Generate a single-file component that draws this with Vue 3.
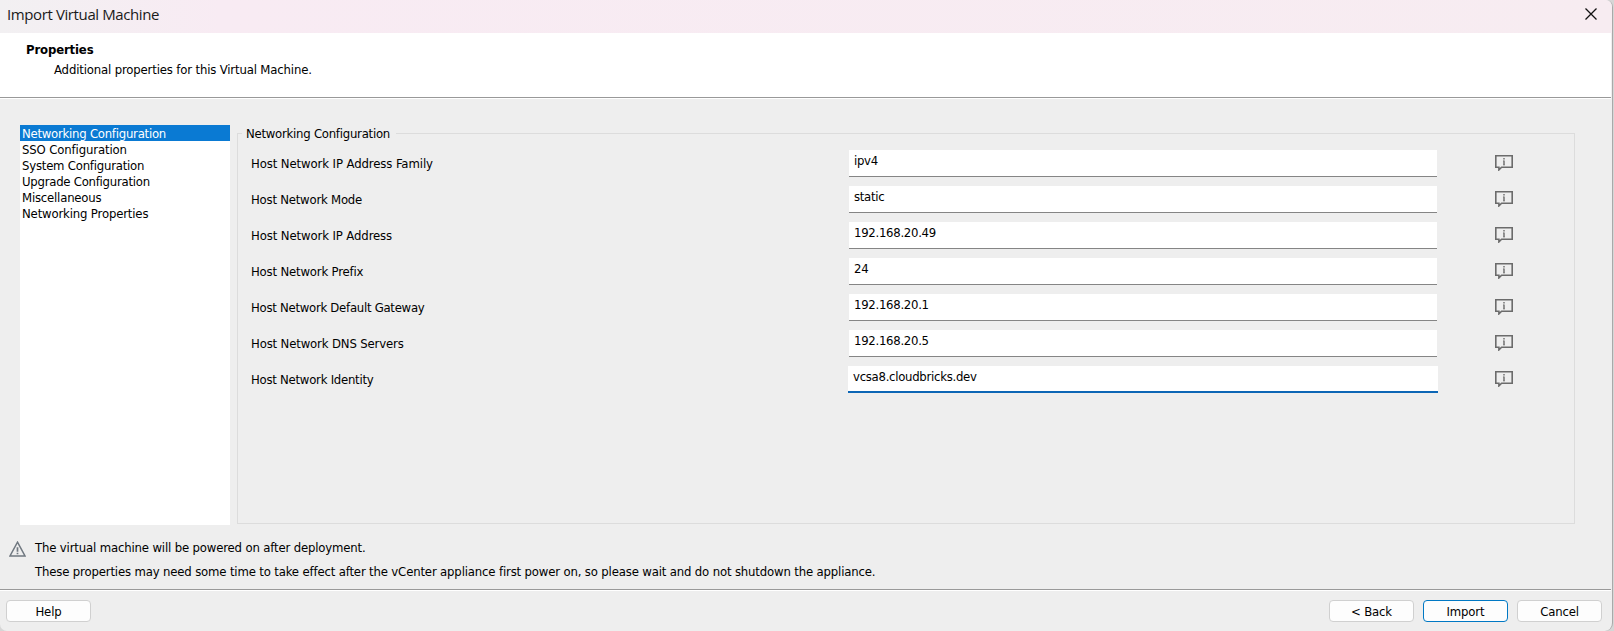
<script setup>
// Tracking is the letter spacing of each caption, in pixels.
const categories = [
  { name: 'Networking Configuration', tracking: -0.25 },
  { name: 'SSO Configuration', tracking: -0.13 },
  { name: 'System Configuration', tracking: -0.22 },
  { name: 'Upgrade Configuration', tracking: -0.25 },
  { name: 'Miscellaneous', tracking: -0.2 },
  { name: 'Networking Properties', tracking: -0.16 },
]
const fields = [
  { label: 'Host Network IP Address Family', tracking: -0.1, value: 'ipv4' },
  { label: 'Host Network Mode', tracking: -0.22, value: 'static' },
  { label: 'Host Network IP Address', tracking: -0.11, value: '192.168.20.49' },
  { label: 'Host Network Prefix', tracking: -0.18, value: '24' },
  { label: 'Host Network Default Gateway', tracking: -0.27, value: '192.168.20.1' },
  { label: 'Host Network DNS Servers', tracking: -0.15, value: '192.168.20.5' },
  { label: 'Host Network Identity', tracking: -0.25, value: 'vcsa8.cloudbricks.dev', focused: true },
]
const tracked = (item) => ({ letterSpacing: `${item.tracking}px` })
</script>

<template>
  <div class="desktop">
    <div class="window">
      <header class="titlebar">
        <span class="title">Import Virtual Machine</span>
        <svg class="close" width="12" height="12" viewBox="0 0 12 12">
          <path d="M0.5 0.5 L11.5 11.5 M11.5 0.5 L0.5 11.5" />
        </svg>
      </header>

      <section class="banner">
        <h1>Properties</h1>
        <p>Additional properties for this Virtual Machine.</p>
      </section>

      <main class="content">
        <ul class="categories">
          <li v-for="(c, i) in categories" :key="c.name" :class="{ selected: i === 0 }" :style="tracked(c)">{{ c.name }}</li>
        </ul>

        <section class="group">
          <h2>Networking Configuration</h2>
          <div v-for="f in fields" :key="f.label" class="row">
            <label :style="tracked(f)">{{ f.label }}</label>
            <div class="field" :class="{ focused: f.focused }">{{ f.value }}</div>
            <svg class="info" width="18" height="16" viewBox="0 0 18 16">
              <path d="M0.8 0.8 H17.2 V12.2 H6.6 L3.9 14.9 V12.2 H0.8 Z" />
              <path class="i" d="M9 3 V4.6 M9 5.6 V10" />
              <path class="serif" d="M8 6 H9 M8 10 H10" />
            </svg>
          </div>
        </section>
      </main>

      <section class="notice">
        <svg class="warn" width="17" height="16" viewBox="0 0 17 16">
          <path d="M8.5 1.2 L16 15 H1 Z" />
          <path class="mark" d="M8.5 6.2 V10.8 M8.5 11.8 V13.2" />
        </svg>
        <div>
          <p>The virtual machine will be powered on after deployment.</p>
          <p>These properties may need some time to take effect after the vCenter appliance first power on, so please wait and do not shutdown the appliance.</p>
        </div>
      </section>

      <footer class="footer">
        <button class="help">Help</button>
        <button>&lt; Back</button>
        <button class="primary">Import</button>
        <button>Cancel</button>
      </footer>
    </div>
  </div>
</template>

<style>
body { margin: 0; overflow: hidden; }
</style>

<style scoped>
* { box-sizing: border-box; }
h1, h2, p, ul { margin: 0; padding: 0; font-weight: normal; }
.desktop { width: 1614px; height: 631px; background: #d6d6d6; overflow: hidden; }
.window {
  width: 1613px;
  height: 631px;
  display: flex;
  flex-direction: column;
  background: #eeeeee;
  border-right: 1px solid #a9a9a9;
  border-radius: 0 7px 8px 7px;
  overflow: hidden;
  color: #000;
  font: 13px/16px Tahoma, "DejaVu Sans Condensed", "DejaVu Sans", sans-serif;
  font-stretch: condensed;
  letter-spacing: -0.158px;
  white-space: nowrap;
}
.titlebar {
  height: 33px;
  flex: none;
  display: flex;
  align-items: center;
  justify-content: space-between;
  padding: 0 15px 5px 7px;
  background: linear-gradient(90deg, #f2f0f2 0, #f8ebf3 220px, #f7ecf1 100%);
}
.title { font: 15px/20px "Segoe UI", "Open Sans", sans-serif; letter-spacing: -0.39px; color: #1a1a1a; }
.close path { stroke: #111; stroke-width: 1.3; fill: none; }
.banner {
  height: 66px;
  flex: none;
  margin-right: 1px;
  padding: 9px 0 0 26px;
  background: #fff;
  box-shadow: inset 0 -1px #fff, inset 0 -2px #999;
}
.banner h1 { font-size: 13px; font-weight: bold; line-height: 16px; letter-spacing: -0.15px; }
.banner p { padding: 4px 0 0 28px; }
.content { height: 427px; flex: none; display: flex; padding: 26px 37px 0 20px; gap: 7px; }
.categories { width: 210px; height: 400px; background: #fff; list-style: none; }
.categories li { height: 16px; padding-left: 2px; line-height: 18px; }
.categories .selected { background: #0a7ad3; color: #fff; }
.group { flex: 1; height: 391px; margin-top: 8px; border: 1px solid #dcdcdc; padding-left: 13px; }
.group h2 {
  width: 154px;
  height: 16px;
  margin: -9px 0 0 -9px;
  padding-left: 4px;
  font-size: 13px;
  line-height: 18px;
  letter-spacing: -0.25px;
  background: #eee;
}
.row { height: 36px; display: flex; align-items: flex-start; }
.group h2 + .row { margin-top: 9px; }
.row label { width: 598px; padding-top: 6px; }
.field {
  width: 588px;
  height: 27px;
  padding: 3px 0 0 5px;
  background: #fff;
  border-bottom: 1px solid #858585;
  letter-spacing: -0.28px;
}
.field.focused { width: 590px; margin: 0 -1px; border-bottom: 2px solid #0c66b5; }
.info { margin: 5px 0 0 58px; fill: none; stroke: #6b6b6b; stroke-width: 1.6; }
.info .i { stroke-width: 1.4; }
.info .serif { stroke-width: 0.6; }
.notice { height: 63px; flex: none; display: flex; padding: 14px 0 0 9px; gap: 9px; }
.notice p { height: 24px; }
.warn { margin-top: 1px; fill: none; stroke: #707880; stroke-width: 1.5; }
.warn .mark { stroke-width: 1.7; }
.footer {
  flex: 1;
  display: flex;
  gap: 9px;
  margin-right: 1px;
  padding: 11px 9px 0 6px;
  box-shadow: inset 0 1px #999, inset 0 2px #fff;
}
.footer button {
  width: 85px;
  height: 22px;
  padding: 2px 0 0;
  border: 1px solid #d0d0d0;
  border-radius: 4px;
  background: #fdfdfd;
  color: #000;
  font: inherit;
  line-height: 18px;
  letter-spacing: inherit;
}
.footer .help { margin-right: auto; }
.footer .primary { border-color: #0078c4; }
</style>
